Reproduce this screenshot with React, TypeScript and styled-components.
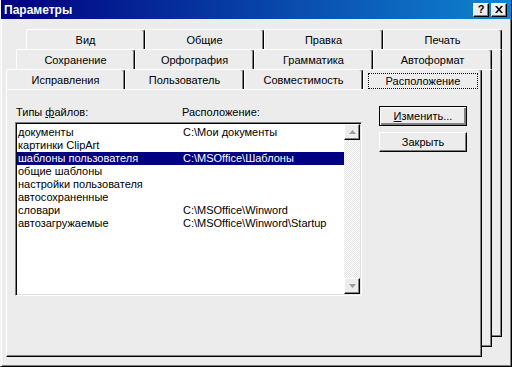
import styled, { createGlobalStyle } from 'styled-components';

const GlobalStyle = createGlobalStyle`
  body {
    margin: 0;
    background: #ececec;
    font-family: "Liberation Sans", Arial, sans-serif;
    font-size: 11px;
    color: #000;
  }
`;

const tabRows = [
  ['Вид', 'Общие', 'Правка', 'Печать'],
  ['Сохранение', 'Орфография', 'Грамматика', 'Автоформат'],
  ['Исправления', 'Пользователь', 'Совместимость', 'Расположение'],
];

const fileTypes = [
  { name: 'документы', path: 'C:\\Мои документы' },
  { name: 'картинки ClipArt', path: '' },
  { name: 'шаблоны пользователя', path: 'C:\\MSOffice\\Шаблоны', selected: true },
  { name: 'общие шаблоны', path: '' },
  { name: 'настройки пользователя', path: '' },
  { name: 'автосохраненные', path: '' },
  { name: 'словари', path: 'C:\\MSOffice\\Winword' },
  { name: 'автозагружаемые', path: 'C:\\MSOffice\\Winword\\Startup' },
];

const App = () => {
  return (
    <Window>
      <GlobalStyle />
      <TitleBar>
        <Title>Параметры</Title>
        <TitleButtons>
          <TitleButton>?</TitleButton>
          <TitleButton>
            <svg width="8" height="7" viewBox="0 0 8 7">
              <path d="M0 0h2l2 2.5L6 0h2L5 3.5 8 7H6L4 4.5 2 7H0l3-3.5z" fill="#000" />
            </svg>
          </TitleButton>
        </TitleButtons>
      </TitleBar>
      <Stack>
        {tabRows.map((row, i) => {
          const depth = 2 - i;
          const isFront = depth === 0;
          return (
            <Sheet key={i} $depth={depth}>
              <TabRow>
                {row.map((label) => {
                  const active = isFront && label === 'Расположение';
                  return (
                    <Tab key={label} $active={active}>
                      {active ? <Focus>{label}</Focus> : label}
                    </Tab>
                  );
                })}
              </TabRow>
              <SheetBody>
                {isFront && (
                  <Content>
                    <LeftColumn>
                      <Labels>
                        <span>
                          Типы <u>ф</u>айлов:
                        </span>
                        <span>Расположение:</span>
                      </Labels>
                      <ListBox>
                        <Rows>
                          {fileTypes.map((f) => (
                            <Row key={f.name} $selected={!!f.selected}>
                              <span>{f.name}</span>
                              <span>{f.path}</span>
                            </Row>
                          ))}
                        </Rows>
                        <ScrollBar>
                          <ScrollButton>
                            <svg width="7" height="4" viewBox="0 0 7 4">
                              <path d="M3.5 0L7 4H0z" fill="#9a9a9a" />
                            </svg>
                          </ScrollButton>
                          <Track />
                          <ScrollButton>
                            <svg width="7" height="4" viewBox="0 0 7 4">
                              <path d="M0 0h7L3.5 4z" fill="#9a9a9a" />
                            </svg>
                          </ScrollButton>
                        </ScrollBar>
                      </ListBox>
                    </LeftColumn>
                    <Buttons>
                      <Button $default>
                        <u>И</u>зменить...
                      </Button>
                      <Button>Закрыть</Button>
                    </Buttons>
                  </Content>
                )}
              </SheetBody>
            </Sheet>
          );
        })}
      </Stack>
    </Window>
  );
};

export default App;

const Window = styled.div`
  width: 512px;
  height: 367px;
  box-sizing: border-box;
  background: #ececec;
  border-left: 1px solid #f4f4f4;
  border-right: 1px solid #000;
  border-bottom: 1px solid #000;
  box-shadow: inset 1px 0 #fff, inset -1px -1px #808080;
  overflow: hidden;
`;

const TitleBar = styled.div`
  height: 19px;
  display: flex;
  align-items: center;
  justify-content: space-between;
  padding: 0 4px 0 3px;
  background: linear-gradient(to right, #000080, #1084d0);
`;

const Title = styled.span`
  color: #fff;
  font-weight: bold;
  font-size: 12px;
`;

const TitleButtons = styled.div`
  display: flex;
  gap: 2px;
`;

const TitleButton = styled.div`
  width: 16px;
  height: 14px;
  box-sizing: border-box;
  display: flex;
  align-items: center;
  justify-content: center;
  background: #ececec;
  border-top: 1px solid #fff;
  border-left: 1px solid #fff;
  border-right: 1px solid #000;
  border-bottom: 1px solid #000;
  box-shadow: inset -1px -1px #808080;
  font-weight: bold;
  font-size: 11px;
  line-height: 1;
`;

const Stack = styled.div`
  display: grid;
  width: 496px;
  height: 328px;
  margin: 10px 0 0 5px;
`;

const Sheet = styled.div<{ $depth: number }>`
  grid-area: 1 / 1;
  display: flex;
  flex-direction: column;
  margin: ${(p) => (2 - p.$depth) * 20}px ${(p) => (2 - p.$depth) * 10}px
    ${(p) => p.$depth * 10}px ${(p) => p.$depth * 10}px;
`;

const TabRow = styled.div`
  display: flex;
  height: 20px;
`;

const Tab = styled.div<{ $active?: boolean }>`
  width: 119px;
  flex: none;
  box-sizing: border-box;
  display: flex;
  align-items: center;
  justify-content: center;
  padding-top: 1px;
  background: #ececec;
  border-top: 1px solid #fff;
  border-left: 1px solid #fff;
  border-right: 1px solid #000;
  border-radius: 2px 3px 0 0;
  box-shadow: inset -1px 0 #808080;
  position: relative;
  z-index: ${(p) => (p.$active ? 1 : 0)};
  margin-bottom: ${(p) => (p.$active ? '-1px' : '0')};
`;

const Focus = styled.span`
  flex: 1;
  align-self: stretch;
  margin: 2px 3px 1px 4px;
  border: 1px dotted #000;
  display: flex;
  align-items: center;
  justify-content: center;
`;

const SheetBody = styled.div`
  flex: 1;
  background: #ececec;
  border-top: 1px solid #fff;
  border-left: 1px solid #fff;
  border-right: 1px solid #000;
  border-bottom: 1px solid #000;
  box-shadow: inset -1px -1px #808080;
`;

const Content = styled.div`
  display: flex;
  gap: 17px;
  padding: 16px 0 0 8px;
`;

const LeftColumn = styled.div`
  width: 347px;
  display: flex;
  flex-direction: column;
  gap: 3px;
`;

const Labels = styled.div`
  display: grid;
  grid-template-columns: 166px 1fr;
  padding-left: 1px;
  height: 13px;
  line-height: 13px;
`;

const ListBox = styled.div`
  height: 174px;
  box-sizing: border-box;
  display: flex;
  background: #fff;
  border-top: 1px solid #808080;
  border-left: 1px solid #808080;
  border-right: 1px solid #fff;
  border-bottom: 1px solid #fff;
  box-shadow: inset 1px 1px #000, inset -1px -1px #dfdfdf;
  padding: 1px;
`;

const Rows = styled.div`
  flex: 1;
  padding-top: 2px;
`;

const Row = styled.div<{ $selected: boolean }>`
  display: grid;
  grid-template-columns: 165px 1fr;
  height: 13px;
  line-height: 13px;
  padding-left: 1px;
  white-space: nowrap;
  background: ${(p) => (p.$selected ? '#000080' : 'transparent')};
  color: ${(p) => (p.$selected ? '#fff' : '#000')};
`;

const ScrollBar = styled.div`
  width: 16px;
  display: flex;
  flex-direction: column;
`;

const ScrollButton = styled.div`
  width: 16px;
  height: 16px;
  box-sizing: border-box;
  display: flex;
  align-items: center;
  justify-content: center;
  background: #ececec;
  border-top: 1px solid #fff;
  border-left: 1px solid #fff;
  border-right: 1px solid #000;
  border-bottom: 1px solid #000;
  box-shadow: inset -1px -1px #808080;
`;

const Track = styled.div`
  flex: 1;
  background: repeating-conic-gradient(#fff 0 25%, #e4e4e4 0 50%) 0 0 / 2px 2px;
`;

const Buttons = styled.div`
  display: flex;
  flex-direction: column;
  gap: 6px;
`;

const Button = styled.div<{ $default?: boolean }>`
  width: 88px;
  height: 20px;
  box-sizing: border-box;
  display: flex;
  align-items: center;
  justify-content: center;
  background: #ececec;
  border: 1px solid ${(p) => (p.$default ? '#000' : 'transparent')};
  border-top-color: ${(p) => (p.$default ? '#000' : '#fff')};
  border-left-color: ${(p) => (p.$default ? '#000' : '#fff')};
  border-right-color: #000;
  border-bottom-color: #000;
  box-shadow: ${(p) =>
    p.$default
      ? 'inset 1px 1px #fff, inset -2px -2px #808080'
      : 'inset -1px -1px #808080'};
`;
